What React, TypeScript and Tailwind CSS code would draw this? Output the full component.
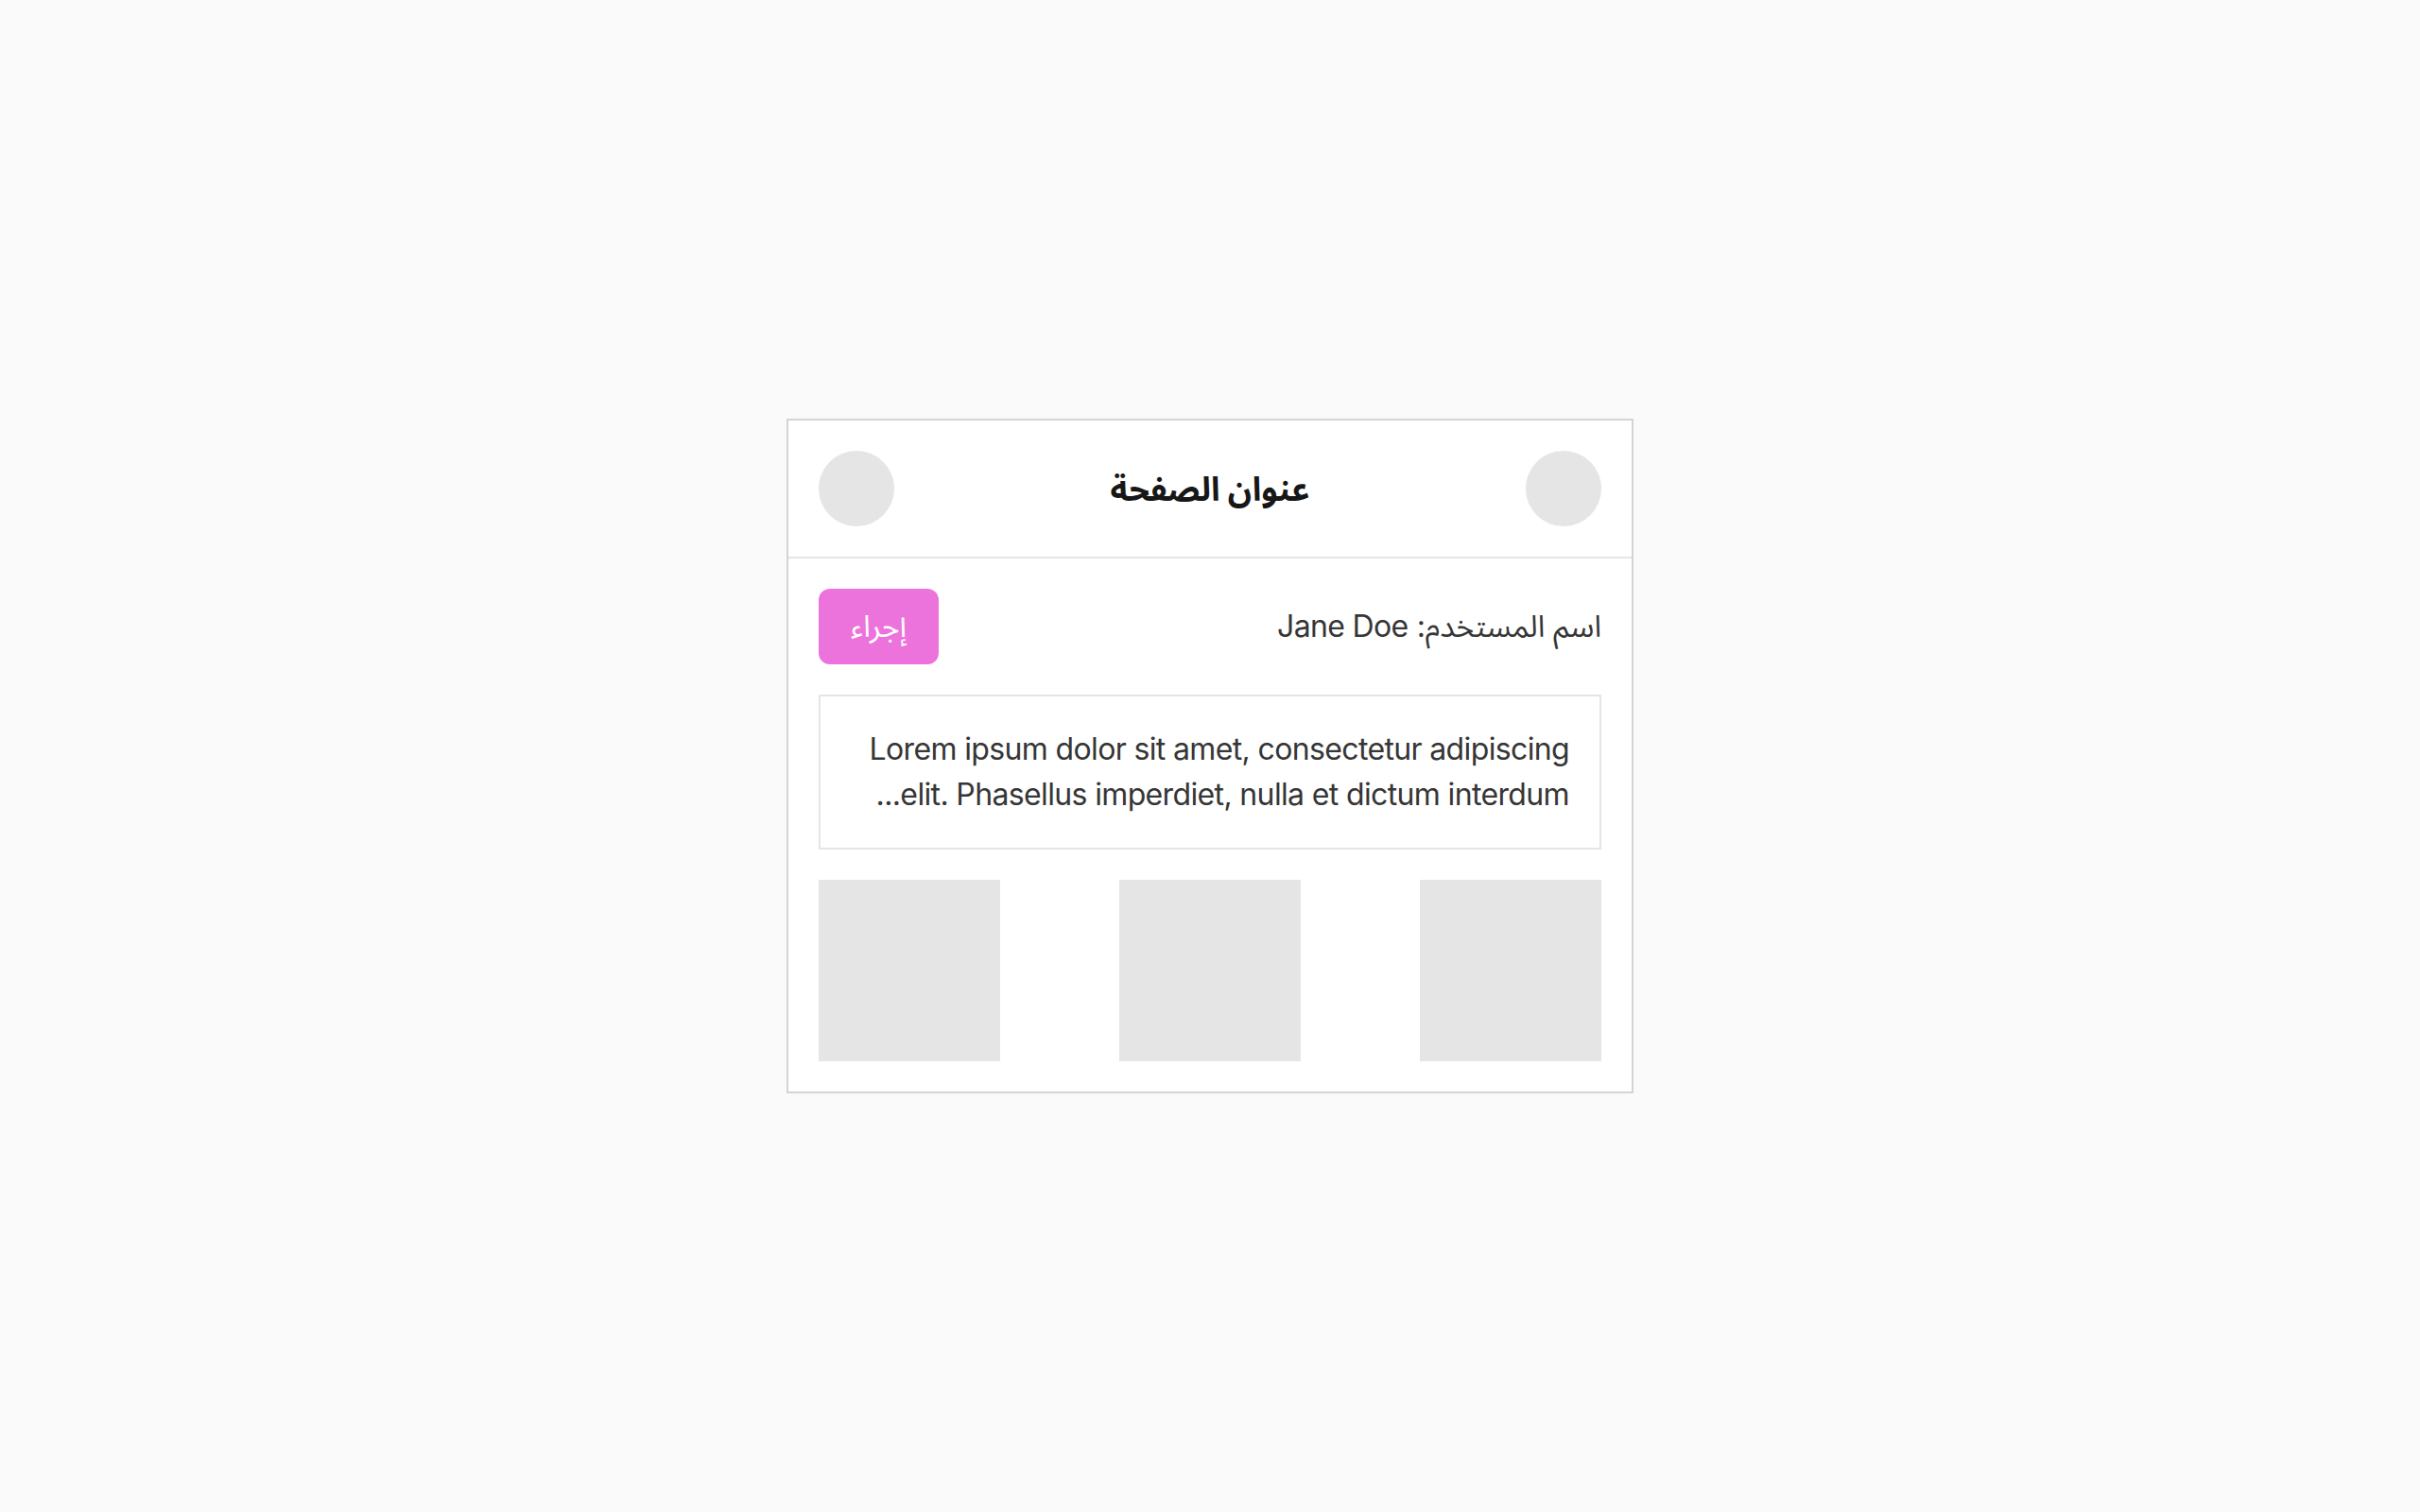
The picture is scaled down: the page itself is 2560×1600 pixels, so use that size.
import React from 'react';

const fontStack = { fontFamily: 'Inter, "Noto Sans Arabic", "Noto Sans", "DejaVu Sans", sans-serif' };

export default function App() {
  return (
    <div dir="rtl" style={fontStack} className="min-h-screen w-full bg-[#fafafa] flex items-center justify-center">
      <div className="w-[896px] bg-white border-2 border-[#d4d4d4]">
        {/* header */}
        <div className="flex items-center justify-between p-8 border-b-2 border-[#e5e5e5]">
          <div className="w-20 h-20 rounded-full bg-[#e5e5e5]" />
          <h1 className="text-[35px] font-bold text-[#171717] leading-[56px]">عنوان الصفحة</h1>
          <div className="w-20 h-20 rounded-full bg-[#e5e5e5]" />
        </div>

        <div className="p-8 flex flex-col gap-8">
          <div className="flex items-center justify-between">
            <p className="text-[32px] text-[#363636] leading-[48px]">
              اسم المستخدم: <span className="tracking-[-0.02em]">Jane Doe</span>
            </p>
            <button className="h-20 px-[34px] rounded-xl bg-[#ec73db] text-white text-[32px] leading-[48px]">
              إجراء
            </button>
          </div>

          <div className="border-2 border-[#e5e5e5] p-8">
            <p className="text-[32px] leading-[48px] tracking-[-0.02em] text-[#363636]">
              Lorem ipsum dolor sit amet, consectetur adipiscing elit. Phasellus imperdiet, nulla et dictum interdum...
            </p>
          </div>

          <div className="flex justify-between">
            <div className="w-48 h-48 bg-[#e5e5e5]" />
            <div className="w-48 h-48 bg-[#e5e5e5]" />
            <div className="w-48 h-48 bg-[#e5e5e5]" />
          </div>
        </div>
      </div>
    </div>
  );
}
